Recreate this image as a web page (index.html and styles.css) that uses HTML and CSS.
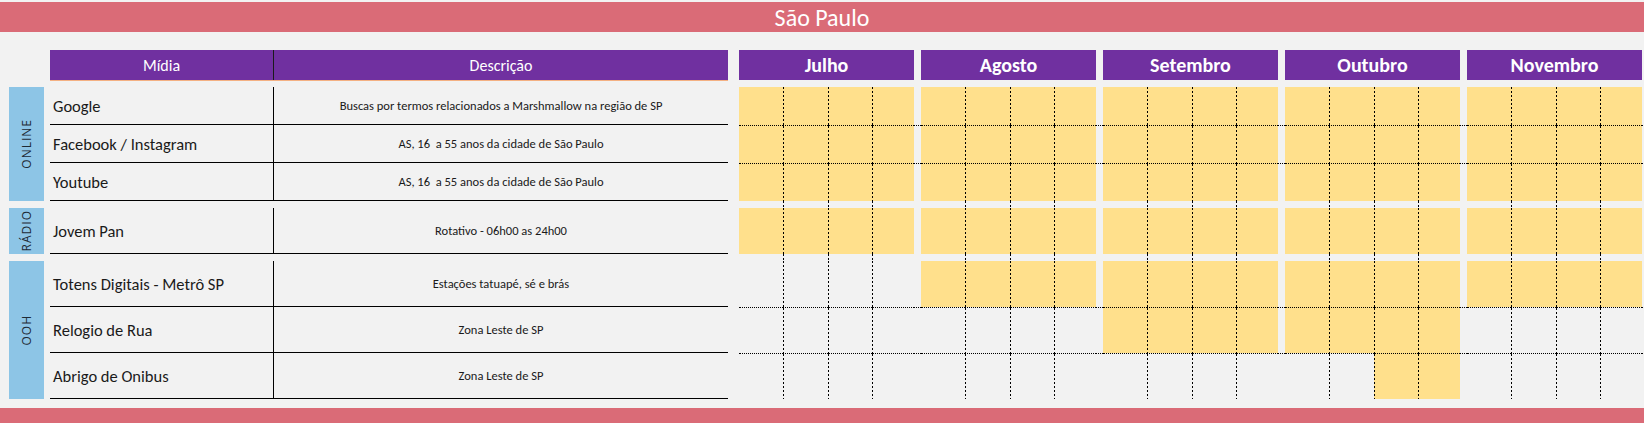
FILE: index.html
```html
<!DOCTYPE html>
<html lang="pt-BR">
<head>
<meta charset="utf-8">
<title>São Paulo</title>
<link rel="stylesheet" href="styles.css">
</head>
<body>
<header class="title">São Paulo</header>
<main class="main">
  <section class="left">
    <div class="thead"><div class="hm">Mídia</div><div class="hd">Descrição</div></div>
    <div class="groups">
      <div class="group">
        <div class="label"><span>ONLINE</span></div>
        <div class="rows">
          <div class="row"><div class="m">Google</div><div class="d">Buscas por termos relacionados a Marshmallow na região de SP</div></div>
          <div class="row"><div class="m">Facebook / Instagram</div><div class="d">AS, 16&nbsp; a 55 anos da cidade de São Paulo</div></div>
          <div class="row"><div class="m">Youtube</div><div class="d">AS, 16&nbsp; a 55 anos da cidade de São Paulo</div></div>
        </div>
      </div>
      <div class="group tall">
        <div class="label"><span>RÁDIO</span></div>
        <div class="rows">
          <div class="row"><div class="m">Jovem Pan</div><div class="d">Rotativo - 06h00 as 24h00</div></div>
        </div>
      </div>
      <div class="group tall">
        <div class="label"><span>OOH</span></div>
        <div class="rows">
          <div class="row"><div class="m">Totens Digitais - Metrô SP</div><div class="d">Estações tatuapé, sé e brás</div></div>
          <div class="row"><div class="m">Relogio de Rua</div><div class="d">Zona Leste de SP</div></div>
          <div class="row"><div class="m">Abrigo de Onibus</div><div class="d">Zona Leste de SP</div></div>
        </div>
      </div>
    </div>
  </section>
  <section class="right">
    <div class="mhead">
      <div class="mh">Julho</div><div class="mh">Agosto</div><div class="mh">Setembro</div><div class="mh">Outubro</div><div class="mh">Novembro</div>
    </div>
    <div class="grid">
      <div class="gr">
        <div class="mo on"><i class="w"></i><i class="w"></i><i class="w"></i><i class="w"></i></div>
        <div class="mo on"><i class="w"></i><i class="w"></i><i class="w"></i><i class="w"></i></div>
        <div class="mo on"><i class="w"></i><i class="w"></i><i class="w"></i><i class="w"></i></div>
        <div class="mo on"><i class="w"></i><i class="w"></i><i class="w"></i><i class="w"></i></div>
        <div class="mo on"><i class="w"></i><i class="w"></i><i class="w"></i><i class="w"></i></div>
      </div>
      <div class="gr ln">
        <div class="mo on"><i class="w"></i><i class="w"></i><i class="w"></i><i class="w"></i></div>
        <div class="mo on"><i class="w"></i><i class="w"></i><i class="w"></i><i class="w"></i></div>
        <div class="mo on"><i class="w"></i><i class="w"></i><i class="w"></i><i class="w"></i></div>
        <div class="mo on"><i class="w"></i><i class="w"></i><i class="w"></i><i class="w"></i></div>
        <div class="mo on"><i class="w"></i><i class="w"></i><i class="w"></i><i class="w"></i></div>
      </div>
      <div class="gr ln">
        <div class="mo on"><i class="w"></i><i class="w"></i><i class="w"></i><i class="w"></i></div>
        <div class="mo on"><i class="w"></i><i class="w"></i><i class="w"></i><i class="w"></i></div>
        <div class="mo on"><i class="w"></i><i class="w"></i><i class="w"></i><i class="w"></i></div>
        <div class="mo on"><i class="w"></i><i class="w"></i><i class="w"></i><i class="w"></i></div>
        <div class="mo on"><i class="w"></i><i class="w"></i><i class="w"></i><i class="w"></i></div>
      </div>
      <div class="gr sp">
        <div class="mo"><i class="w"></i><i class="w"></i><i class="w"></i><i class="w"></i></div>
        <div class="mo"><i class="w"></i><i class="w"></i><i class="w"></i><i class="w"></i></div>
        <div class="mo"><i class="w"></i><i class="w"></i><i class="w"></i><i class="w"></i></div>
        <div class="mo"><i class="w"></i><i class="w"></i><i class="w"></i><i class="w"></i></div>
        <div class="mo"><i class="w"></i><i class="w"></i><i class="w"></i><i class="w"></i></div>
      </div>
      <div class="gr t">
        <div class="mo on"><i class="w"></i><i class="w"></i><i class="w"></i><i class="w"></i></div>
        <div class="mo on"><i class="w"></i><i class="w"></i><i class="w"></i><i class="w"></i></div>
        <div class="mo on"><i class="w"></i><i class="w"></i><i class="w"></i><i class="w"></i></div>
        <div class="mo on"><i class="w"></i><i class="w"></i><i class="w"></i><i class="w"></i></div>
        <div class="mo on"><i class="w"></i><i class="w"></i><i class="w"></i><i class="w"></i></div>
      </div>
      <div class="gr sp">
        <div class="mo"><i class="w"></i><i class="w"></i><i class="w"></i><i class="w"></i></div>
        <div class="mo"><i class="w"></i><i class="w"></i><i class="w"></i><i class="w"></i></div>
        <div class="mo"><i class="w"></i><i class="w"></i><i class="w"></i><i class="w"></i></div>
        <div class="mo"><i class="w"></i><i class="w"></i><i class="w"></i><i class="w"></i></div>
        <div class="mo"><i class="w"></i><i class="w"></i><i class="w"></i><i class="w"></i></div>
      </div>
      <div class="gr t">
        <div class="mo"><i class="w"></i><i class="w"></i><i class="w"></i><i class="w"></i></div>
        <div class="mo on"><i class="w"></i><i class="w"></i><i class="w"></i><i class="w"></i></div>
        <div class="mo on"><i class="w"></i><i class="w"></i><i class="w"></i><i class="w"></i></div>
        <div class="mo on"><i class="w"></i><i class="w"></i><i class="w"></i><i class="w"></i></div>
        <div class="mo on"><i class="w"></i><i class="w"></i><i class="w"></i><i class="w"></i></div>
      </div>
      <div class="gr t ln">
        <div class="mo"><i class="w"></i><i class="w"></i><i class="w"></i><i class="w"></i></div>
        <div class="mo"><i class="w"></i><i class="w"></i><i class="w"></i><i class="w"></i></div>
        <div class="mo on"><i class="w"></i><i class="w"></i><i class="w"></i><i class="w"></i></div>
        <div class="mo on"><i class="w"></i><i class="w"></i><i class="w"></i><i class="w"></i></div>
        <div class="mo"><i class="w"></i><i class="w"></i><i class="w"></i><i class="w"></i></div>
      </div>
      <div class="gr t ln">
        <div class="mo"><i class="w"></i><i class="w"></i><i class="w"></i><i class="w"></i></div>
        <div class="mo"><i class="w"></i><i class="w"></i><i class="w"></i><i class="w"></i></div>
        <div class="mo"><i class="w"></i><i class="w"></i><i class="w"></i><i class="w"></i></div>
        <div class="mo"><i class="w"></i><i class="w"></i><i class="w on"></i><i class="w on"></i></div>
        <div class="mo"><i class="w"></i><i class="w"></i><i class="w"></i><i class="w"></i></div>
      </div>
    </div>
  </section>
</main>
<footer class="foot"></footer>
</body>
</html>
```

FILE: styles.css
```css
* { box-sizing: border-box; }

body {
  margin: 0;
  width: 1644px;
  height: 423px;
  overflow: hidden;
  background: #f2f2f2;
  font-family: Carlito, Calibri, Lato, "Liberation Sans", sans-serif;
  color: #1a1a1a;
  display: flex;
  flex-direction: column;
}

.title {
  margin-top: 2px;
  height: 30px;
  flex-shrink: 0;
  background: #da6b77;
  color: #fff;
  font-size: 24px;
  display: flex;
  align-items: center;
  justify-content: center;
}

.main {
  display: flex;
  gap: 11px;
  margin-top: 18px;
  padding-left: 9px;
}

.left, .right { flex-shrink: 0; display: flex; flex-direction: column; }

.thead {
  display: flex;
  margin-left: 41px;
  width: 678px;
  height: 31px;
  margin-bottom: 6px;
  background: #7030a0;
  border-bottom: 1px solid #f4b183;
  color: #fff;
  font-size: 16px;
}
.thead .hm {
  width: 224px;
  border-right: 1px solid #1a1a1a;
  display: flex; align-items: center; justify-content: center;
}
.thead .hd { flex: 1; display: flex; align-items: center; justify-content: center; }

.groups { display: flex; flex-direction: column; gap: 7px; }
.group { display: flex; gap: 6px; }

.label {
  width: 35px;
  background: #8dc5e6;
  display: flex; align-items: center; justify-content: center;
}
.label span {
  writing-mode: vertical-rl;
  transform: rotate(180deg);
  font-family: "Open Sans", sans-serif;
  font-size: 12px;
  letter-spacing: 1px;
  color: #1e2a35;
}

.rows { width: 678px; display: flex; flex-direction: column; }
.row { display: flex; height: 38px; border-bottom: 1px solid #000; }
.tall .row { height: 46px; }
.row .m {
  width: 224px;
  border-right: 1px solid #000;
  padding-left: 3px;
  display: flex; align-items: center;
  font-size: 16.5px;
}
.row .d {
  flex: 1;
  display: flex; align-items: center; justify-content: center;
  font-size: 12.5px;
}

.mhead { display: flex; gap: 7px; margin-bottom: 7px; }
.mh {
  width: 175px; height: 30px;
  background: #7030a0;
  color: #fff;
  font-weight: bold;
  font-size: 20px;
  display: flex; align-items: center; justify-content: center;
}

.grid { display: flex; flex-direction: column; }
.gr { display: flex; height: 38px; }
.gr.t { height: 46px; }
.gr.sp { height: 7px; }
.mo { display: flex; flex-shrink: 0; }
.mo::after { content: ""; width: 7px; flex-shrink: 0; }
.w { display: block; width: 44px; flex-shrink: 0; }
.w:nth-child(2) { width: 45px; }
.w:nth-child(4) { width: 42px; }
.w + .w {
  background-image: linear-gradient(#000 50%, transparent 50%);
  background-size: 1px 4px;
  background-repeat: repeat-y;
  background-position: 0 0;
}
.ln .w, .ln .mo::after { border-top: 1px dotted #000; }
.mo.on .w, .w.on { background-color: #ffe08c; }

.foot { margin-top: auto; height: 15px; flex-shrink: 0; background: #da6b77; }
```
